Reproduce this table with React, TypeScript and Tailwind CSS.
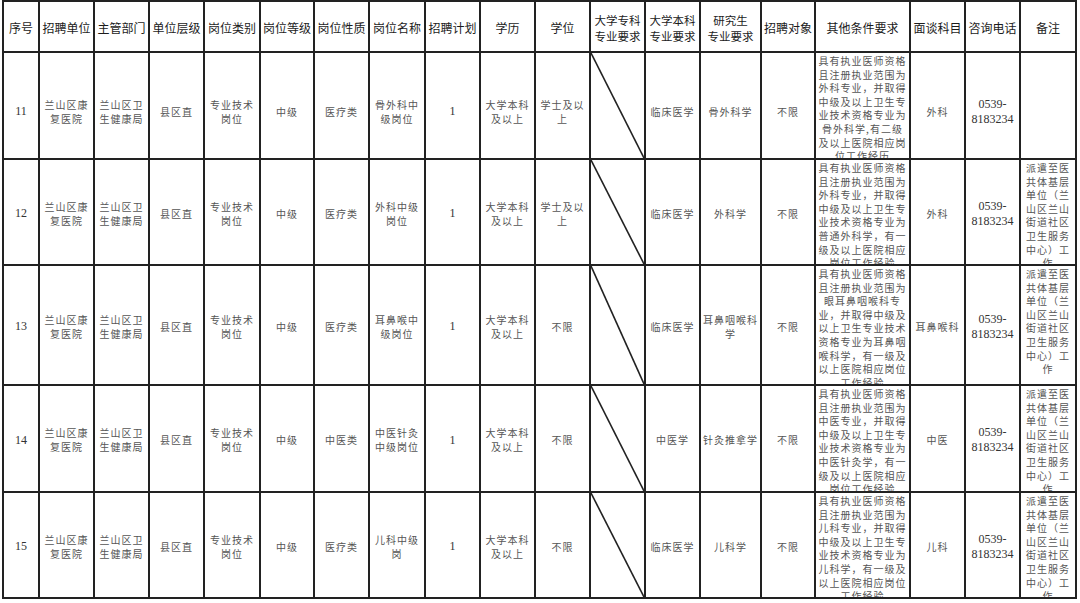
import React from 'react';

type Row = {
  no: string;
  name: string[];
  degree: string[];
  nature: string;
  bachelor: string;
  grad: string[];
  other: string[];
  subject: string;
  note: string[];
  shift?: boolean;
};

const NOTE = ['派遣至医', '共体基层', '单位（兰', '山区兰山', '街道社区', '卫生服务', '中心）工', '作'];

const rows: Row[] = [
  {
    no: '11',
    name: ['骨外科中', '级岗位'],
    degree: ['学士及以', '上'],
    nature: '医疗类',
    bachelor: '临床医学',
    grad: ['骨外科学'],
    other: ['具有执业医师资格', '且注册执业范围为', '外科专业，并取得', '中级及以上卫生专', '业技术资格专业为', '骨外科学,有二级', '及以上医院相应岗', '位工作经历'],
    subject: '外科',
    note: [],
    shift: true,
  },
  {
    no: '12',
    name: ['外科中级', '岗位'],
    degree: ['学士及以', '上'],
    nature: '医疗类',
    bachelor: '临床医学',
    grad: ['外科学'],
    other: ['具有执业医师资格', '且注册执业范围为', '外科专业，并取得', '中级及以上卫生专', '业技术资格专业为', '普通外科学，有一', '级及以上医院相应', '岗位工作经验'],
    subject: '外科',
    note: NOTE,
  },
  {
    no: '13',
    name: ['耳鼻喉中', '级岗位'],
    degree: ['不限'],
    nature: '医疗类',
    bachelor: '临床医学',
    grad: ['耳鼻咽喉科', '学'],
    other: ['具有执业医师资格', '且注册执业范围为', '眼耳鼻咽喉科专', '业，并取得中级及', '以上卫生专业技术', '资格专业为耳鼻咽', '喉科学，有一级及', '以上医院相应岗位', '工作经验'],
    subject: '耳鼻喉科',
    note: NOTE,
  },
  {
    no: '14',
    name: ['中医针灸', '中级岗位'],
    degree: ['不限'],
    nature: '中医类',
    bachelor: '中医学',
    grad: ['针灸推拿学'],
    other: ['具有执业医师资格', '且注册执业范围为', '中医专业，并取得', '中级及以上卫生专', '业技术资格专业为', '中医针灸学，有一', '级及以上医院相应', '岗位工作经验'],
    subject: '中医',
    note: NOTE,
  },
  {
    no: '15',
    name: ['儿科中级', '岗'],
    degree: ['不限'],
    nature: '医疗类',
    bachelor: '临床医学',
    grad: ['儿科学'],
    other: ['具有执业医师资格', '且注册执业范围为', '儿科专业，并取得', '中级及以上卫生专', '业技术资格专业为', '儿科学，有一级及', '以上医院相应岗位', '工作经验'],
    subject: '儿科',
    note: NOTE,
  },
];

const headers: string[][] = [
  ['序号'], ['招聘单位'], ['主管部门'], ['单位层级'], ['岗位类别'], ['岗位等级'], ['岗位性质'],
  ['岗位名称'], ['招聘计划'], ['学历'], ['学位'], ['大学专科', '专业要求'], ['大学本科', '专业要求'],
  ['研究生', '专业要求'], ['招聘对象'], ['其他条件要求'], ['面谈科目'], ['咨询电话'], ['备注'],
];

const cellBase = 'relative overflow-hidden border-r-2 border-b-2 border-[#222]';

function Lines({ lines }: { lines: string[] }) {
  return (
    <>
      {lines.map((l, i) => (
        <div key={i} className="whitespace-nowrap">{l}</div>
      ))}
    </>
  );
}

function Center({ lines, shift, num }: { lines: string[]; shift?: boolean; num?: boolean }) {
  return (
    <div
      className={`${cellBase} flex flex-col items-center justify-center text-center ${shift ? 'pt-[12px]' : 'pt-[3px]'} ${
        num
          ? "font-['Liberation_Serif',serif] text-[12px] leading-[15px] text-[#333]"
          : 'text-[10px] leading-[14px] tracking-[1px] text-[#555]'
      }`}
    >
      <Lines lines={lines} />
    </div>
  );
}

function TopText({ lines }: { lines: string[] }) {
  return (
    <div className={`${cellBase} pt-px text-center text-[10px] leading-[13.6px] tracking-[1px] text-[#555]`}>
      <Lines lines={lines} />
    </div>
  );
}

function Diagonal() {
  return (
    <div className={cellBase}>
      <svg className="absolute inset-0 h-full w-full" viewBox="0 0 100 100" preserveAspectRatio="none">
        <line x1="0" y1="0" x2="100" y2="100" stroke="#222" strokeWidth="1.6" vectorEffect="non-scaling-stroke" />
      </svg>
    </div>
  );
}

export default function App() {
  return (
    <div className="h-[603px] w-[1080px] overflow-hidden bg-white font-['Noto_Sans_CJK_SC',sans-serif]">
      <div className="ml-[2px] grid w-max grid-cols-[36px_55px_55px_55px_56px_54px_55px_56px_55px_55px_55px_55px_55px_61px_54px_95px_55px_55px_56px] grid-rows-[51px_107px_106px_120px_107px_106px] border-l-2 border-t-2 border-[#222]">
        {headers.map((h, i) => (
          <div
            key={i}
            className={`${cellBase} flex flex-col items-center justify-center pt-[2px] text-center ${
              h.length > 1 ? 'text-[11.5px] leading-[16px]' : 'text-[12px] leading-[16px]'
            } text-[#1c1c1c]`}
          >
            <Lines lines={h} />
          </div>
        ))}
        {rows.map((r) => (
          <React.Fragment key={r.no}>
            <Center lines={[r.no]} shift={r.shift} num />
            <Center lines={['兰山区康', '复医院']} shift={r.shift} />
            <Center lines={['兰山区卫', '生健康局']} shift={r.shift} />
            <Center lines={['县区直']} shift={r.shift} />
            <Center lines={['专业技术', '岗位']} shift={r.shift} />
            <Center lines={['中级']} shift={r.shift} />
            <Center lines={[r.nature]} shift={r.shift} />
            <Center lines={r.name} shift={r.shift} />
            <Center lines={['1']} shift={r.shift} num />
            <Center lines={['大学本科', '及以上']} shift={r.shift} />
            <Center lines={r.degree} shift={r.shift} />
            <Diagonal />
            <Center lines={[r.bachelor]} shift={r.shift} />
            <Center lines={r.grad} shift={r.shift} />
            <Center lines={['不限']} shift={r.shift} />
            <TopText lines={r.other} />
            <Center lines={[r.subject]} shift={r.shift} />
            <Center lines={['0539-', '8183234']} shift={r.shift} num />
            {r.note.length ? <TopText lines={r.note} /> : <div className={cellBase} />}
          </React.Fragment>
        ))}
      </div>
    </div>
  );
}
